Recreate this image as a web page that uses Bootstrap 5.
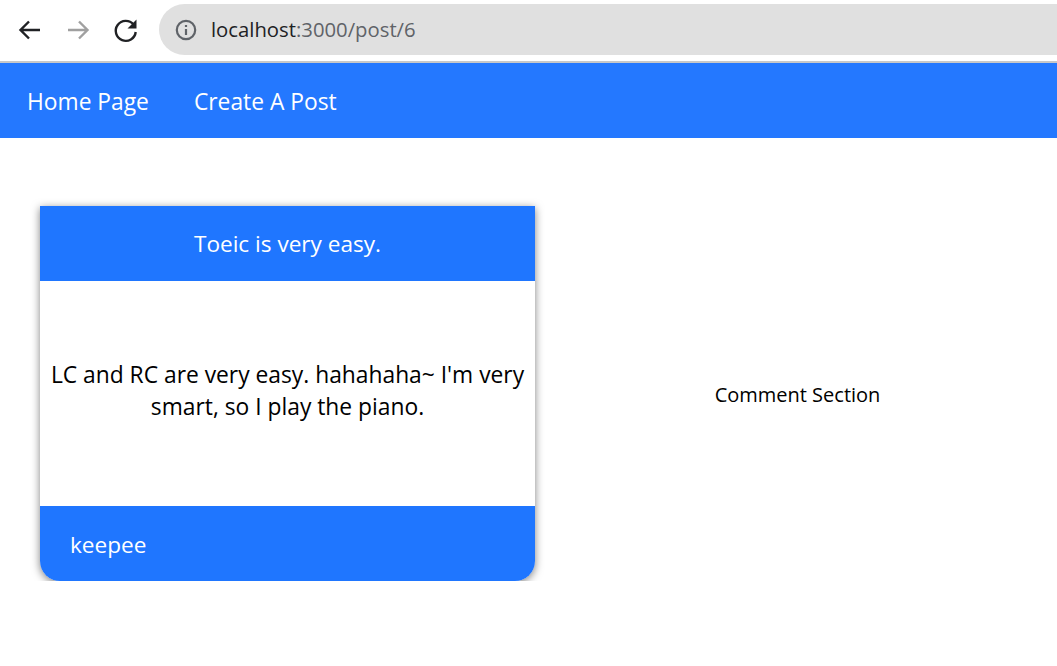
<!DOCTYPE html>
<html lang="en">
<head>
    <meta charset="UTF-8">
    <meta name="viewport" content="width=device-width, initial-scale=1.0">
    <title>Post 6</title>
    <link href="https://cdn.jsdelivr.net/npm/bootstrap@5.3.0/dist/css/bootstrap.min.css" rel="stylesheet">
    <style>
        body {
            font-family: "Open Sans", "Noto Sans", sans-serif;
            background: #fff;
            overflow: hidden;
        }
        .chrome-bar {
            height: 63px;
            border-bottom: 2px solid #c8c8c8;
            padding: 4px 0 6px 16px;
        }
        .chrome-btn {
            width: 28px;
            height: 28px;
            margin-right: 20px;
            flex: none;
        }
        .chrome-btn:nth-child(3) { margin-right: 19px; }
        .address-pill {
            flex-grow: 1;
            height: 51px;
            background: #e0e0e0;
            border-radius: 26px 0 0 26px;
            padding-left: 16px;
            font-size: 20.3px;
            color: #5f6368;
        }
        .address-pill b {
            font-weight: 400;
            color: #202124;
        }
        .url-text { margin-left: 6px; }
        .top-nav {
            height: 75px;
            background: #2478ff;
            padding: 4px 0 0 27px;
            gap: 45px;
        }
        .top-nav a {
            color: #fff;
            font-size: 22.8px;
            text-decoration: none;
        }
        .post-area {
            padding: 68px 0 0 40px;
        }
        .post-card {
            width: 495px;
            height: 375px;
            border: 0;
            border-radius: 0 0 20px 20px;
            box-shadow: 0 2px 8px rgba(0, 0, 0, .5);
            overflow: hidden;
        }
        .post-title, .post-author {
            height: 75px;
            flex: none;
            background: #1f76ff;
            color: #fff;
            font-size: 22.6px;
        }
        .post-author { padding: 2px 0 0 30px; }
        .post-text {
            flex-grow: 1;
            padding: 0 5px 6px;
            font-size: 22.8px;
            line-height: 32px;
            color: #000;
            text-align: center;
        }
        .comment-box {
            flex-grow: 1;
            height: 375px;
            padding: 2px 0 0 3px;
            color: #000;
            font-size: 20px;
        }
    </style>
</head>
<body>
    <!-- Browser toolbar -->
    <div class="chrome-bar d-flex align-items-center">
        <svg class="chrome-btn" viewBox="0 0 28 28" fill="none" stroke="#202124" stroke-width="2.4"><path d="M24 14H5M13 5.500 4.500 14l8.500 8.500"/></svg>
        <svg class="chrome-btn" viewBox="0 0 28 28" fill="none" stroke="#a0a0a0" stroke-width="2.4"><path d="M4 14h19M15 5.500 23.500 14 15 22.500"/></svg>
        <svg class="chrome-btn" viewBox="0 0 28 28" fill="none"><path d="M21.500 8.500A10 10 0 1 0 23.700 16" stroke="#202124" stroke-width="2.400"/><path d="M24.500 3.500v9h-9z" fill="#202124"/></svg>
        <div class="address-pill d-flex align-items-center gap-2">
            <svg width="22" height="22" viewBox="0 0 22 22" fill="none"><circle cx="11" cy="11" r="9.200" stroke="#5f6368" stroke-width="2.200"/><path d="M11 10v6M11 6v2" stroke="#5f6368" stroke-width="2.200"/></svg>
            <span class="url-text"><b>localhost</b>:3000/post/6</span>
        </div>
    </div>

    <!-- Nav -->
    <nav class="top-nav d-flex align-items-center">
        <a href="#">Home Page</a>
        <a href="#">Create A Post</a>
    </nav>

    <!-- Post -->
    <div class="post-area d-flex">
        <div class="card post-card">
            <div class="post-title d-flex align-items-center justify-content-center">Toeic is very easy.</div>
            <div class="post-text d-flex align-items-center">LC and RC are very easy. hahahaha~ I'm very smart, so I play the piano.</div>
            <div class="post-author d-flex align-items-center">keepee</div>
        </div>
        <div class="comment-box d-flex align-items-center justify-content-center">Comment Section</div>
    </div>
    <script src="https://cdn.jsdelivr.net/npm/bootstrap@5.3.0/dist/js/bootstrap.bundle.min.js"></script>
</body>
</html>
